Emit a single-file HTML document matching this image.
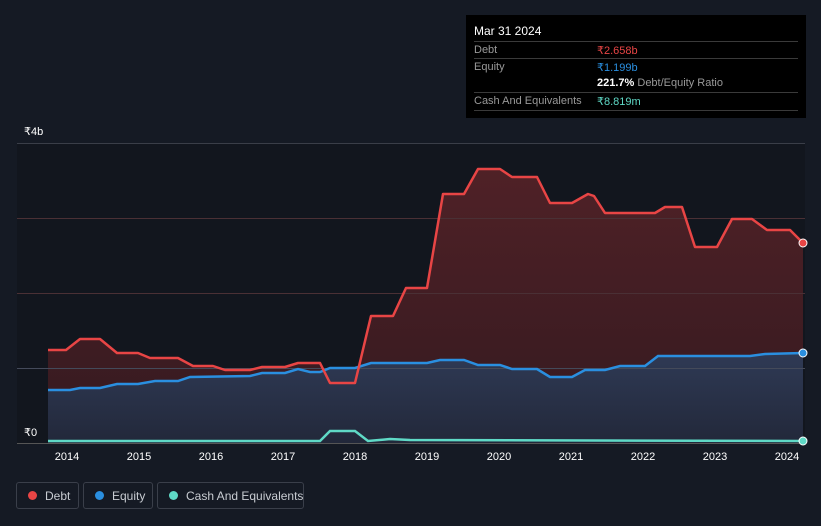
<!DOCTYPE html>
<html><head><meta charset="utf-8"><style>
body{margin:0;width:821px;height:526px;background:#151a24;font-family:"Liberation Sans",sans-serif;overflow:hidden;position:relative}
.tip{position:absolute;left:466px;top:15px;width:340px;height:103px;background:#000;color:#fff;font-size:11px}
.tip .h{position:absolute;left:8px;top:9px;font-size:12px}
.row{position:absolute;left:8px;width:324px;border-top:1px solid #3a3a3a;height:17px}
.row span{position:absolute;top:2px;white-space:nowrap}
.lg{position:absolute;top:482px;height:27px;border:1px solid #3a3f4a;border-radius:3px;color:#c8ccd2;font-size:12px;box-sizing:border-box;white-space:nowrap}
.lg i{position:absolute;left:11px;top:8px;width:9px;height:9px;border-radius:50%}
.lg span{position:absolute;top:6px}
</style></head><body>
<svg width="821" height="526" style="position:absolute;left:0;top:0">
<defs>
<linearGradient id="dg" x1="0" y1="0" x2="0" y2="1"><stop offset="0" stop-color="#5a2328" stop-opacity=".85"/><stop offset="1" stop-color="#3a1a20" stop-opacity=".85"/></linearGradient>
<linearGradient id="eg" x1="0" y1="0" x2="0" y2="1"><stop offset="0" stop-color="#2f3a55"/><stop offset="1" stop-color="#22283a"/></linearGradient>
</defs>
<rect x="17" y="143" width="788" height="300" fill="#12161e"/>
<path d="M48 350 L66 350 L80 339 L100 339 L117 353 L138 353 L150 358 L178 358 L193 366 L213 366 L225 370 L250 370 L262 367 L285 367 L298 363 L320 363 L330 383 L355 383 L371 316 L393 316 L406 288 L427 288 L443 194 L464 194 L478 169 L500 169 L512 177 L537 177 L550 203 L572 203 L588 194 L594 196 L605 213 L655 213 L665 207 L682 207 L695 247 L717 247 L732 219 L752 219 L767 230 L790 230 L803 243 L803 443 L48 443Z" fill="url(#dg)"/>
<path d="M48 390 L70 390 L80 388 L100 388 L117 384 L138 384 L155 381 L178 381 L190 377 L250 376 L262 373 L285 373 L298 369 L310 372 L320 372 L330 368 L355 368 L371 363 L427 363 L440 360 L464 360 L478 365 L500 365 L512 369 L537 369 L550 377 L572 377 L585 370 L605 370 L620 366 L645 366 L658 356 L750 356 L765 354 L803 353 L803 443 L48 443Z" fill="url(#eg)"/>
<g stroke="#3a3e48" stroke-width="1">
<line x1="17" y1="143.5" x2="805" y2="143.5"/><line x1="17" y1="218.5" x2="805" y2="218.5" stroke="#4a3035"/><line x1="17" y1="293.5" x2="805" y2="293.5" stroke="#4a3035"/><line x1="17" y1="368.5" x2="805" y2="368.5" stroke="#444a5a"/><line x1="17" y1="443.5" x2="805" y2="443.5" stroke="#555"/>
</g>
<path d="M48 441 L320 441 L330 431 L355 431 L368 441 L390 439 L410 440 L803 441" fill="none" stroke="#5fd9c6" stroke-width="2.5"/>
<path d="M48 390 L70 390 L80 388 L100 388 L117 384 L138 384 L155 381 L178 381 L190 377 L250 376 L262 373 L285 373 L298 369 L310 372 L320 372 L330 368 L355 368 L371 363 L427 363 L440 360 L464 360 L478 365 L500 365 L512 369 L537 369 L550 377 L572 377 L585 370 L605 370 L620 366 L645 366 L658 356 L750 356 L765 354 L803 353" fill="none" stroke="#2a8fe0" stroke-width="2.5"/>
<path d="M48 350 L66 350 L80 339 L100 339 L117 353 L138 353 L150 358 L178 358 L193 366 L213 366 L225 370 L250 370 L262 367 L285 367 L298 363 L320 363 L330 383 L355 383 L371 316 L393 316 L406 288 L427 288 L443 194 L464 194 L478 169 L500 169 L512 177 L537 177 L550 203 L572 203 L588 194 L594 196 L605 213 L655 213 L665 207 L682 207 L695 247 L717 247 L732 219 L752 219 L767 230 L790 230 L803 243" fill="none" stroke="#e84545" stroke-width="2.5" stroke-linejoin="round"/>
<circle cx="803" cy="243" r="4" fill="#e84545" stroke="#fff" stroke-width="1"/>
<circle cx="803" cy="353" r="4" fill="#2a8fe0" stroke="#fff" stroke-width="1"/>
<circle cx="803" cy="441" r="4" fill="#5fd9c6" stroke="#fff" stroke-width="1"/>
<g fill="#fff" font-size="11" font-family="Liberation Sans" text-anchor="middle">
<text x="67" y="460">2014</text><text x="139" y="460">2015</text><text x="211" y="460">2016</text><text x="283" y="460">2017</text><text x="355" y="460">2018</text><text x="427" y="460">2019</text><text x="499" y="460">2020</text><text x="571" y="460">2021</text><text x="643" y="460">2022</text><text x="715" y="460">2023</text><text x="787" y="460">2024</text>
<text x="24" y="135" text-anchor="start">₹4b</text><text x="24" y="436" text-anchor="start">₹0</text>
</g>
</svg>
<div class="tip"><div class="h">Mar 31 2024</div>
<div class="row" style="top:26px"><span style="color:#999">Debt</span><span style="left:123px;color:#e84545">₹2.658b</span></div>
<div class="row" style="top:43px"><span style="color:#999">Equity</span><span style="left:123px;color:#2a8fe0">₹1.199b</span></div>
<div class="row" style="top:60px;border:0"><span style="left:123px"><b>221.7%</b> <span style="position:static;color:#999">Debt/Equity Ratio</span></span></div>
<div class="row" style="top:77px;border-bottom:1px solid #3a3a3a"><span style="color:#999">Cash And Equivalents</span><span style="left:123px;color:#5fd9c6">₹8.819m</span></div>
</div>
<div class="lg" style="left:16px;width:63px"><i style="background:#e84545"></i><span style="left:28px">Debt</span></div>
<div class="lg" style="left:83px;width:70px"><i style="background:#2a8fe0"></i><span style="left:28px">Equity</span></div>
<div class="lg" style="left:157px;width:147px"><i style="background:#5fd9c6"></i><span style="left:28px">Cash And Equivalents</span></div>
</body></html>
